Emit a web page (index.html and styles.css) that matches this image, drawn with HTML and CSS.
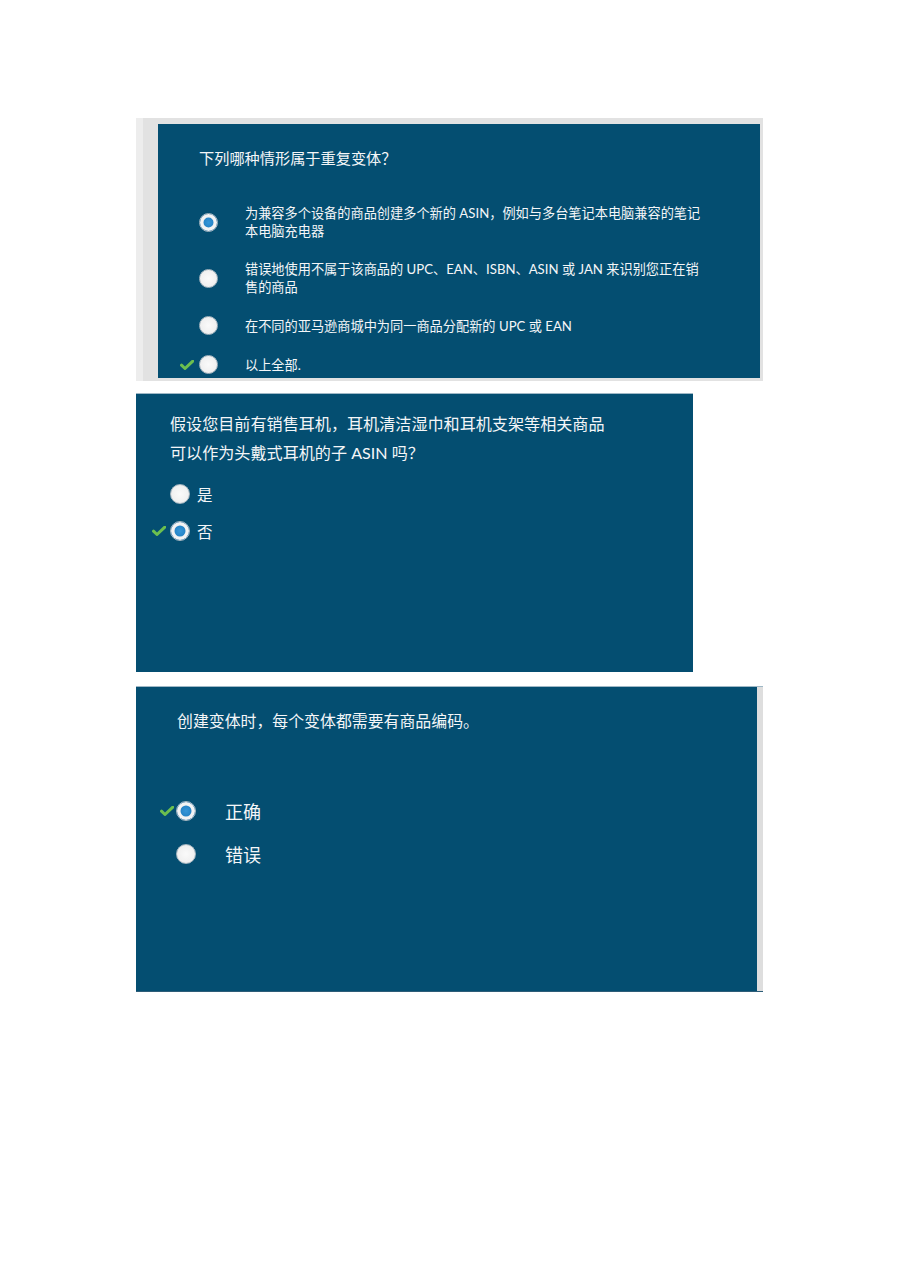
FILE: index.html
```html
<!DOCTYPE html>
<html lang="zh-CN">
<head>
  <meta charset="UTF-8" />
  <meta name="viewport" content="width=device-width, initial-scale=1.0"/>
  <title>变体测验</title>
  <link rel="stylesheet" href="styles.css">
</head>

<body>
  <div class="page">

    <!-- 第 1 题 -->
    <div class="shot shot-one">
      <div class="quiz quiz-one">
        <p class="question">下列哪种情形属于重复变体？</p>
        <ul class="options">
          <li class="option">
            <span class="mark"></span>
            <span class="radio checked"></span>
            <span class="label">为兼容多个设备的商品创建多个新的 ASIN，例如与多台笔记本电脑兼容的笔记<br>本电脑充电器</span>
          </li>
          <li class="option">
            <span class="mark"></span>
            <span class="radio"></span>
            <span class="label">错误地使用不属于该商品的 UPC、EAN、ISBN、ASIN 或 JAN 来识别您正在销<br>售的商品</span>
          </li>
          <li class="option">
            <span class="mark"></span>
            <span class="radio"></span>
            <span class="label">在不同的亚马逊商城中为同一商品分配新的 UPC 或 EAN</span>
          </li>
          <li class="option">
            <span class="mark"><svg viewBox="0 0 14 10" width="14" height="10"><path d="M1.5 5.2 L5 8.5 L12.8 1.2" fill="none" stroke="#6cbf4f" stroke-width="3" stroke-linecap="round" stroke-linejoin="round"/></svg></span>
            <span class="radio"></span>
            <span class="label">以上全部.</span>
          </li>
        </ul>
      </div>
    </div>

    <!-- 第 2 题 -->
    <div class="shot shot-two">
      <div class="quiz quiz-two">
        <p class="question">假设您目前有销售耳机，耳机清洁湿巾和耳机支架等相关商品<br>可以作为头戴式耳机的子 ASIN 吗？</p>
        <ul class="options">
          <li class="option">
            <span class="mark"></span>
            <span class="radio"></span>
            <span class="label">是</span>
          </li>
          <li class="option">
            <span class="mark"><svg viewBox="0 0 14 10" width="14" height="10"><path d="M1.5 5.2 L5 8.5 L12.8 1.2" fill="none" stroke="#6cbf4f" stroke-width="3" stroke-linecap="round" stroke-linejoin="round"/></svg></span>
            <span class="radio checked"></span>
            <span class="label">否</span>
          </li>
        </ul>
      </div>
    </div>

    <!-- 第 3 题 -->
    <div class="shot shot-three">
      <div class="quiz quiz-three">
        <p class="question">创建变体时，每个变体都需要有商品编码。</p>
        <ul class="options">
          <li class="option">
            <span class="mark"><svg viewBox="0 0 14 10" width="14" height="10"><path d="M1.5 5.2 L5 8.5 L12.8 1.2" fill="none" stroke="#6cbf4f" stroke-width="3" stroke-linecap="round" stroke-linejoin="round"/></svg></span>
            <span class="radio checked"></span>
            <span class="label">正确</span>
          </li>
          <li class="option">
            <span class="mark"></span>
            <span class="radio"></span>
            <span class="label">错误</span>
          </li>
        </ul>
      </div>
    </div>

  </div>
</body>
</html>
```

FILE: styles.css
```css
body {
  margin: 0;
  background: #fff;
  font-family: Lato, "Noto Sans CJK SC", sans-serif;
}

.page {
  padding: 118px 0 0 136px;
}

.shot {
  box-sizing: border-box;
}

.quiz {
  background: #044e71;
  color: #f4f6f8;
  box-sizing: border-box;
}

.question {
  margin: 0;
}

.options {
  list-style: none;
  margin: 0;
  padding: 0;
  display: flex;
  flex-direction: column;
}

.option {
  display: flex;
  align-items: center;
}

.mark {
  width: 16px;
  flex: none;
  display: flex;
  align-items: center;
}

.radio {
  flex: none;
  border-radius: 50%;
  box-sizing: border-box;
  background: radial-gradient(circle, #fafafa 0%, #f1f1f1 60%, #e0e0e0 100%);
  border: 1px solid #a9b8c2;
}

/* 选中：白色圆环 + 蓝色圆心 */
.radio.checked {
  background: radial-gradient(circle, #3596d8 0%, #1c78bb 70%, #15679f 100%);
  box-shadow: inset 0 0 0 3.5px #f3f3f3;
}

/* 第 1 题：左侧带灰色边框的截图 */
.shot-one {
  width: 627px;
  height: 263px;
  background: #e2e2e2;
  padding: 6px 3px 3px 15px;
  border-left: 7px solid #ededed;
}

.quiz-one {
  height: 100%;
  padding: 25px 0 0 41px;
  font-size: 15.2px;
}

.quiz-one .question {
  line-height: 18px;
}

.quiz-one .options {
  margin-top: 37px;
  gap: 20px;
  padding-left: 22px;
  margin-left: -41px;
}

.quiz-one .mark {
  margin-right: 3px;
}

.quiz-one .radio {
  width: 19px;
  height: 19px;
}

.quiz-one .label {
  margin-left: 27px;
  font-size: 13.2px;
  line-height: 18px;
}

/* 第 2 题 */
.shot-two {
  margin-top: 12px;
  width: 557px;
  height: 279px;
  border-top: 1px solid #9fb8c6;
}

.quiz-two {
  height: 100%;
  padding: 15px 0 0 34px;
  font-size: 16.1px;
}

.quiz-two .question {
  line-height: 29px;
}

.quiz-two .options {
  margin-top: 16px;
  gap: 15px;
  margin-left: -18px;
}

.quiz-two .option {
  height: 22px;
}

.quiz-two .mark {
  margin-right: 2px;
}

.quiz-two .radio {
  width: 20px;
  height: 20px;
}

.quiz-two .label {
  margin-left: 7px;
  font-size: 15.5px;
}

/* 第 3 题 */
.shot-three {
  margin-top: 14px;
  width: 627px;
  height: 306px;
  background: #dedede;
  padding-right: 6px;
  border-top: 1px solid #9fb8c6;
  border-bottom: 1px solid #2d5d78;
}

.quiz-three {
  height: 100%;
  padding: 24px 0 0 41px;
  font-size: 15.9px;
}

.quiz-three .question {
  line-height: 20px;
}

.quiz-three .options {
  margin-top: 68px;
  gap: 19px;
  margin-left: -17px;
}

.quiz-three .option {
  height: 24px;
}

.quiz-three .radio {
  width: 20px;
  height: 20px;
}

.quiz-three .label {
  margin-left: 29px;
  font-size: 18px;
}
```
